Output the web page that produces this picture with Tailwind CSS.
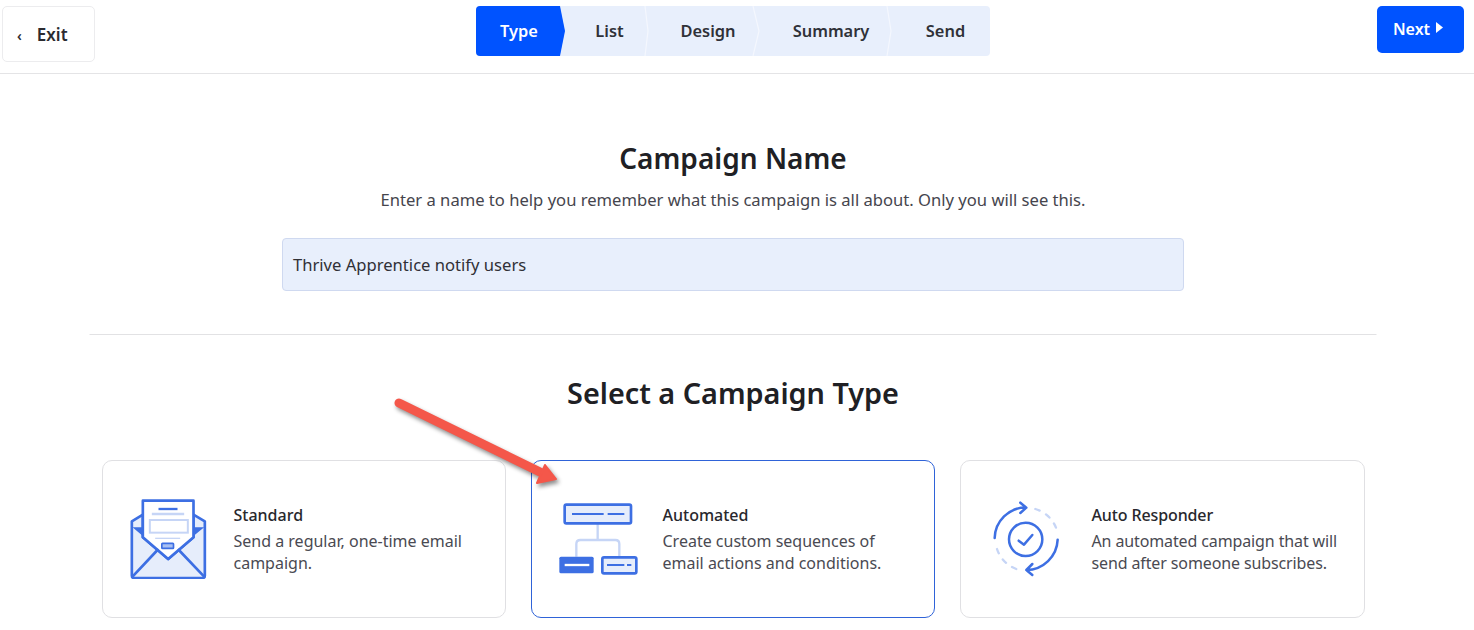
<!DOCTYPE html>
<html lang="en">
<head>
    <meta charset="UTF-8">
    <title>Campaign Type</title>
    <script src="https://cdn.jsdelivr.net/npm/@tailwindcss/browser@4"></script>
</head>
<body class="bg-white h-[630px] overflow-hidden relative font-['Noto_Sans',sans-serif] text-[#202024]">
    <!-- top bar -->
    <header class="h-[74px] border-b border-[#e4e4e6] relative flex justify-between items-start">
        <button class="ml-[2px] mt-[6px] w-[93px] h-[56px] border border-[#ececee] rounded-[5px] flex items-center pl-[14px] pt-[2px] text-[17px] font-semibold text-[#2b2b30]">
            <span class="text-[14px] mr-[15px]">‹</span>Exit
        </button>
        <button class="mr-[10px] mt-[6px] w-[87px] h-[47px] bg-[#0053ff] rounded-[5px] flex items-center justify-center gap-[6px] pr-[5px] pb-[2px] text-[16px] font-semibold text-white">
            Next
            <svg class="mb-[2px]" width="7" height="11" viewBox="0 0 7 11"><polygon points="0,0 7,5.5 0,11" fill="#fff"/></svg>
        </button>
        <!-- stepper -->
        <nav class="absolute left-[476px] top-[6px] w-[514px] h-[50px] bg-[#e8effc] rounded-[4px] flex text-[16.4px] font-semibold text-[#2f3138]">
            <div class="relative w-[84px] bg-[#0053ff] rounded-l-[4px] text-white flex items-center justify-center pl-[2px]">
                Type
                <svg class="absolute left-[83px] top-0" width="7" height="50" viewBox="0 0 7 50"><polygon points="0,0 1,0 6,25 1,50 0,50" fill="#0053ff"/></svg>
            </div>
            <div class="relative w-[85px] flex items-center justify-center pl-[14px]">
                List
                <svg class="absolute left-[84px] top-0" width="7" height="50" viewBox="0 0 7 50"><polyline points="1,0 4,25 1,50" fill="none" stroke="#f4f7fe" stroke-width="1.2"/></svg>
            </div>
            <div class="relative w-[108px] flex items-center justify-center pl-[18px]">
                Design
                <svg class="absolute left-[107px] top-0" width="9" height="50" viewBox="0 0 9 50"><polyline points="1,0 7,25 1,50" fill="none" stroke="#f4f7fe" stroke-width="1.2"/></svg>
            </div>
            <div class="relative w-[134px] flex items-center justify-center pl-[22px]">
                Summary
                <svg class="absolute left-[133px] top-0" width="7" height="50" viewBox="0 0 7 50"><polyline points="1,0 5,25 1,50" fill="none" stroke="#f4f7fe" stroke-width="1.2"/></svg>
            </div>
            <div class="flex-1 flex items-center justify-center pl-[14px]">Send</div>
        </nav>
    </header>

    <main class="flex flex-col items-center pr-[8px]">
        <h1 class="mt-[63px] h-[42px] text-[28px] leading-[42px] font-semibold">Campaign Name</h1>
        <p class="mt-[9px] h-[24px] text-[16.6px] leading-[24px] text-[#45454d]">Enter a name to help you remember what this campaign is all about. Only you will see this.</p>
        <div class="mt-[26px] w-[902px] h-[53px] bg-[#e8effc] border border-[#cfd9f0] rounded-[4px] flex items-center pl-[10px] pt-[1px] text-[16.6px] text-[#303036]">Thrive Apprentice notify users</div>
        <hr class="mt-[43px] w-[1287px] border-[#e2e2e4] -translate-x-[0.5px]">
        <h2 class="mt-[37px] h-[42px] text-[28.8px] leading-[42px] font-semibold">Select a Campaign Type</h2>

        <div class="mt-[46px] w-[1263px] grid grid-cols-[404px_404px_405px] gap-[25px]">
            <div class="h-[158px] border border-[#e0e0e3] rounded-[10px] flex items-center pl-[27px]">
                <svg class="mr-[27px] shrink-0" width="77" height="80" viewBox="90 55 230 240" fill="none">
                    <path d="M95 122 L128 102 V170 L204 235 L280 170 V102 L314 122 V285 Q314 292 307 292 H102 Q95 292 95 285 Z" fill="#e6edfb" stroke="#3d6fe3" stroke-width="8" stroke-linejoin="round"/>
                    <path d="M128 60 H280 V170 L204 235 L128 170 Z" fill="#fff" stroke="#3d6fe3" stroke-width="8" stroke-linejoin="round"/>
                    <path d="M97 140 L128 140 V166 Z M312 140 L280 140 V166 Z" fill="#3d6fe3"/>
                    <path d="M97 288 L172 208 M312 288 L236 208" stroke="#3d6fe3" stroke-width="8" stroke-linecap="round"/>
                    <path d="M175 85 H232" stroke="#3d6fe3" stroke-width="7"/>
                    <path d="M155 100 H252" stroke="#c6d5f6" stroke-width="7"/>
                    <rect x="149" y="118" width="114" height="38" stroke="#c6d5f6" stroke-width="6"/>
                    <path d="M165 173 H240" stroke="#c6d5f6" stroke-width="4"/>
                    <rect x="185" y="188" width="35" height="15" rx="2" fill="#a9c0f2" stroke="#3d6fe3" stroke-width="5"/>
                </svg>
                <div>
                    <div class="text-[16px] leading-[22px] font-medium text-[#28282d]">Standard</div>
                    <p class="mt-[4px] text-[16px] leading-[22px] text-[#4a4a52]">Send a regular, one-time email<br>campaign.</p>
                </div>
            </div>
            <div class="h-[158px] border border-[#2f63d8] rounded-[10px] flex items-center pl-[25px]">
                <svg class="mr-[24px] shrink-0" width="82" height="80" viewBox="80 55 246 240" fill="none">
                    <path d="M202 128 V178 M138 228 V190 Q138 178 150 178 H255 Q267 178 267 190 V228" stroke="#c6d5f6" stroke-width="7"/>
                    <rect x="103" y="72" width="199" height="56" rx="5" fill="#e6edfb" stroke="#3d6fe3" stroke-width="8"/>
                    <path d="M125 100 H220 M232 100 H282" stroke="#3d6fe3" stroke-width="6"/>
                    <rect x="87" y="228" width="103" height="50" rx="5" fill="#3d6fe3"/>
                    <path d="M103 253 H177" stroke="#fff" stroke-width="7"/>
                    <rect x="216" y="230" width="102" height="48" rx="5" fill="#e6edfb" stroke="#3d6fe3" stroke-width="8"/>
                    <path d="M230 253 H282 M290 253 H303" stroke="#3d6fe3" stroke-width="6"/>
                </svg>
                <div>
                    <div class="text-[16px] leading-[22px] font-medium text-[#28282d]">Automated</div>
                    <p class="mt-[4px] text-[16px] leading-[22px] text-[#4a4a52]">Create custom sequences of<br>email actions and conditions.</p>
                </div>
            </div>
            <div class="h-[158px] border border-[#e0e0e3] rounded-[10px] flex items-center pl-[32px]">
                <svg class="mr-[33px] shrink-0" width="66" height="80" viewBox="70 55 198 240" fill="none">
                    <path d="M197 85 A95 95 0 0 1 262 150 M82 205 A95 95 0 0 0 140 265" stroke="#c6d5f6" stroke-width="7" stroke-dasharray="14 22" stroke-linecap="round"/>
                    <path d="M75 172 A95 95 0 0 1 168 80 M152 66 L170 81 L152 97" stroke="#3d6fe3" stroke-width="7.5" stroke-linecap="round" stroke-linejoin="round"/>
                    <path d="M264 177 A95 95 0 0 1 170 268 M188 250 L170 268 L188 283" stroke="#3d6fe3" stroke-width="7.5" stroke-linecap="round" stroke-linejoin="round"/>
                    <circle cx="168" cy="176" r="50" stroke="#3d6fe3" stroke-width="7.5"/>
                    <path d="M147 180 L163 192 L188 163" stroke="#3d6fe3" stroke-width="7.5" stroke-linecap="round" stroke-linejoin="round"/>
                </svg>
                <div class="tracking-[-0.12px]">
                    <div class="text-[16px] leading-[22px] font-medium text-[#28282d]">Auto Responder</div>
                    <p class="mt-[4px] text-[16px] leading-[22px] text-[#4a4a52]">An automated campaign that will<br>send after someone subscribes.</p>
                </div>
            </div>
        </div>
    </main>

    <!-- annotation arrow over the page -->
    <svg class="absolute left-[380px] top-[385px] drop-shadow-[2px_3px_2px_rgba(0,0,0,0.45)]" width="190" height="110" viewBox="380 385 190 110" fill="none">
        <path d="M399 403 L540 472" stroke="#f4574a" stroke-width="9" stroke-linecap="round"/>
        <polygon points="556,479 537,483 545,465" fill="#f4574a" stroke="#f4574a" stroke-width="2" stroke-linejoin="round"/>
    </svg>
</body>
</html>
